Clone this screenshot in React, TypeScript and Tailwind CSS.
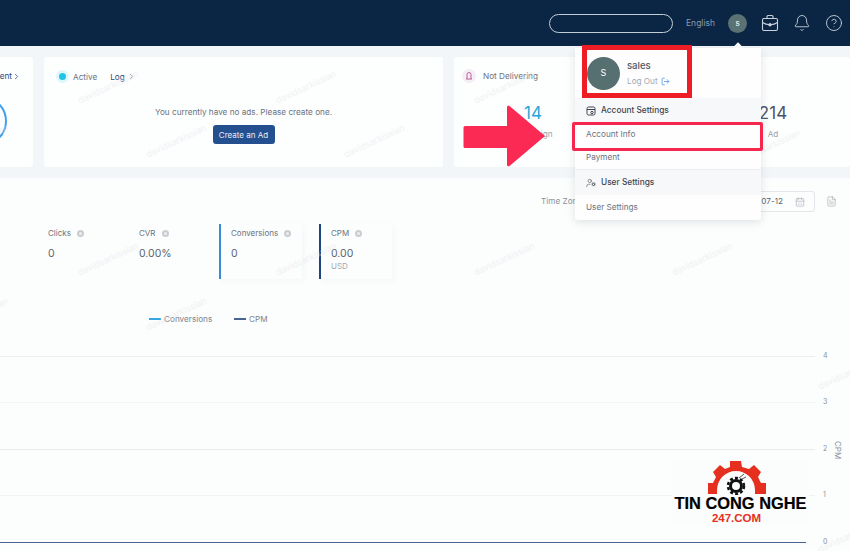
import React from 'react';
import { Bell, CircleHelp, LogOut, CalendarDays, FileText, UserCog, ChevronRight } from 'lucide-react';

const watermarks = [
  { x: 110, y: 86 }, { x: 308, y: 86 }, { x: 506, y: 86 },
  { x: -20, y: 140 }, { x: 178, y: 140 }, { x: 376, y: 140 }, { x: 772, y: 145 },
  { x: 110, y: 258 }, { x: 308, y: 258 }, { x: 506, y: 258 }, { x: 704, y: 258 },
  { x: -20, y: 313 }, { x: 178, y: 313 }, { x: 850, y: 372 }, { x: 850, y: 535 },
];

const InfoDot = () => (
  <span className="inline-flex h-[7px] w-[7px] items-center justify-center rounded-full bg-[#c9cdd1]">
    <span className="h-[3px] w-[3px] rounded-full bg-[#eceef0]" />
  </span>
);

const Metric = ({ label, value, unit, accent, width }: { label: string; value: string; unit?: string; accent?: string; width: string }) => (
  <div className={`h-[55px] shrink-0 ${width} ${accent ? `border-l-2 ${accent} pl-[10px] shadow-[2px_2px_6px_rgba(210,220,230,0.2)]` : ''}`}>
    <div className="flex items-center gap-[6px] pt-[4px] text-[8px] leading-[11px] text-[#6b7280]">
      {label} <InfoDot />
    </div>
    <div className="mt-[8px] text-[10.5px] leading-[14px] text-[#5b6472]">{value}</div>
    {unit && <div className="text-[8px] leading-[11px] text-[#a5abb3]">{unit}</div>}
  </div>
);

const ChartRow = ({ label, line }: { label: string; line: string }) => (
  <div className="flex h-[12px] items-center">
    <div className={line} />
    <span className="absolute left-[823px] text-[7px] text-[#8b929a]">{label}</span>
  </div>
);

const MenuHeading = ({ icon, label, height }: { icon: React.ReactNode; label: string; height: string }) => (
  <div className={`flex ${height} items-center gap-[5px] bg-[#f7f8f9] pl-[11px] text-[8.3px] font-medium text-[#3f4650]`}>
    {icon}
    {label}
  </div>
);

const Logo = () => (
  <div className="absolute left-[672px] top-[461px] flex w-[137px] flex-col items-center bg-[#fbfcfc]">
    <svg className="mr-[7px]" width="60" height="34" viewBox="0 0 60 34">
      <path
        d="M23 0h11l1 6 7 2 5-4 7 7-3 5 3 6h5v11H48v-4a19 19 0 0 0-38 0v4H1V22h5l3-6-3-5 7-7 5 4 5-2z"
        fill="#e5301f"
      />
      <circle cx="29" cy="25" r="5.5" fill="none" stroke="#111" strokeWidth="3" />
      <circle cx="29" cy="25" r="8" fill="none" stroke="#111" strokeWidth="2.5" strokeDasharray="3 2.2" />
      <path d="M32 17l5-4M35 18l4-2" stroke="#555" strokeWidth="1" />
    </svg>
    <div className="mt-[1px] whitespace-nowrap font-['Liberation_Sans',sans-serif] text-[16.4px] font-bold leading-[15px] text-black [-webkit-text-stroke:0.2px_black]">
      TIN CONG NGHE
    </div>
    <div className="mr-[8px] mt-[2px] font-['Liberation_Sans',sans-serif] text-[11.5px] font-bold leading-[11px] text-[#e5301f]">
      247.COM
    </div>
  </div>
);

const App = () => {
  return (
    <div className="relative h-[551px] w-[850px] overflow-hidden bg-[#f3f6f9] font-['Inter',sans-serif]">
      <header className="flex h-[46px] items-center justify-end bg-[#0b2545] pr-[7px]">
        <div className="mr-[13px] h-[19px] w-[124px] rounded-full border border-[#c3cdd5]" />
        <span className="mr-[13px] text-[8.5px] text-[#8b9bad]">English</span>
        <div className="mr-[14px] flex h-[19px] w-[19px] items-center justify-center rounded-full bg-[#5a7274] text-[8px] text-white">
          s
        </div>
        <svg className="mr-[14px]" width="18" height="18" viewBox="0 0 18 18" fill="none" stroke="#c8d2da" strokeWidth="1.1">
          <rect x="1.5" y="4.5" width="15" height="12" rx="1.5" />
          <path d="M6 4.5V2.5a1 1 0 0 1 1-1h4a1 1 0 0 1 1 1v2M1.5 8.5c4 3 11 3 15 0" />
          <path d="M9 9.5l1.5 1.2L9 12l-1.5-1.3z" fill="#c8d2da" />
        </svg>
        <Bell size={18} strokeWidth={1.2} className="mr-[14px] text-[#c8d2da]" />
        <CircleHelp size={18} strokeWidth={1.2} className="text-[#c8d2da]" />
      </header>

      <section className="mt-[11px] flex h-[110px] gap-[11px]">
        <div className="ml-[-167px] flex w-[200px] shrink-0 flex-col items-end rounded-[3px] bg-[#fdfefe] pr-[12px] pt-[14px]">
          <div className="flex items-center text-[8.2px] leading-[11px] text-[#2c4a7c]">
            Management <ChevronRight size={9} />
          </div>
          <div className="mr-[14px] mt-[14px] h-[50px] w-[50px] rounded-full border-[2.5px] border-[#3f9ff0]" />
        </div>

        <div className="w-[399px] shrink-0 rounded-[3px] bg-[#fdfefe] pt-[13px]">
          <div className="flex items-center pl-[12px] text-[8.2px] leading-[12px]">
            <span className="flex h-[13px] w-[13px] items-center justify-center rounded-full bg-[#dff6fa]">
              <span className="h-[7px] w-[7px] rounded-full bg-[#22c4e4]" />
            </span>
            <span className="ml-[4px] text-[#6b7280]">Active</span>
            <span className="ml-[13px] text-[#2c4a7c]">Log</span>
            <ChevronRight size={9} className="ml-[2px] text-[#6b7280]" />
          </div>
          <p className="mt-[23px] text-center text-[8.2px] leading-[12px] text-[#6b7280]">
            You currently have no ads. Please create one.
          </p>
          <div className="mt-[7px] flex justify-center">
            <button className="h-[19px] w-[62px] rounded-[3px] bg-[#24508f] text-[8px] text-[#e8eef6]">Create an Ad</button>
          </div>
        </div>

        <div className="flex-1 rounded-[3px] bg-[#fdfefe] pt-[12px]">
          <div className="flex items-center pl-[8px] text-[8.2px] leading-[14px] text-[#6b7280]">
            <span className="flex h-[14px] w-[14px] items-center justify-center rounded-full bg-[#f4eef5]">
              <svg width="8" height="8" viewBox="0 0 8 8" fill="none" stroke="#c0609a" strokeWidth="1">
                <path d="M2 7V2.5a2 2 0 0 1 4 0V7M1 7h6" />
              </svg>
            </span>
            <span className="ml-[7px]">Not Delivering</span>
          </div>
          <div className="mt-[20px] grid w-[379px] grid-cols-3 pl-[19px] text-center">
            <div>
              <div className="text-[17px] leading-[20px] text-[#2aa6d8]">14</div>
              <div className="mt-[5px] text-[8.2px] leading-[12px] text-[#9aa1a9]">Campaign</div>
            </div>
            <div>
              <div className="text-[17px] leading-[20px] text-[#2aa6d8]">14</div>
              <div className="mt-[5px] text-[8.2px] leading-[12px] text-[#9aa1a9]">Ad Group</div>
            </div>
            <div>
              <div className="text-[17px] leading-[20px] text-[#4b5565]">214</div>
              <div className="mt-[5px] text-[8.2px] leading-[12px] text-[#9aa1a9]">Ad</div>
            </div>
          </div>
        </div>
      </section>

      <section className="mt-[11px] h-[373px] bg-[#fcfdfd] pt-[13px]">
        <div className="flex h-[21px] items-center pl-[541px]">
          <span className="w-[204px] text-[8.2px] text-[#8b929a]">Time Zone</span>
          <div className="flex h-[21px] w-[70px] items-center justify-end rounded-[3px] border border-[#e3e6ea] pr-[9px] text-[8.2px] text-[#5b6472]">
            <span className="mr-[12px]">07-12</span>
            <CalendarDays size={10} strokeWidth={1.3} className="text-[#9aa1a9]" />
          </div>
          <FileText size={11} strokeWidth={1.3} className="ml-[11px] text-[#9aa1a9]" />
        </div>

        <div className="mt-[12px] flex pl-[48px]">
          <Metric label="Clicks" value="0" width="w-[91px]" />
          <Metric label="CVR" value="0.00%" width="w-[80px]" />
          <Metric label="Conversions" value="0" accent="border-[#3b8ad8]" width="w-[83px]" />
          <div className="w-[17px] shrink-0" />
          <Metric label="CPM" value="0.00" unit="USD" accent="border-[#1c4480]" width="w-[73px]" />
        </div>

        <div className="mt-[34px] flex h-[12px] items-center pl-[149px] text-[8.2px] text-[#7b838d]">
          <span className="h-[2px] w-[12px] bg-[#38a6e0]" />
          <span className="ml-[3px] w-[70px]">Conversions</span>
          <span className="h-[2px] w-[12px] bg-[#4a6491]" />
          <span className="ml-[3px]">CPM</span>
        </div>

        <div className="mt-[25px] flex h-[198px] flex-col justify-between">
          <ChartRow label="4" line="h-px w-[815px] bg-[#eceff1]" />
          <ChartRow label="3" line="h-px w-[815px] bg-[#f2f4f5]" />
          <ChartRow label="2" line="h-px w-[815px] bg-[#e8ecee]" />
          <ChartRow label="1" line="h-px w-[815px] bg-[#f0f2f3]" />
          <ChartRow label="0" line="h-px w-[806px] bg-[#4a6491]" />
        </div>
      </section>

      <span className="absolute left-[832px] top-[441px] text-[8px] text-[#8b929a] [writing-mode:vertical-rl]">CPM</span>

      {watermarks.map((w) => (
        <span
          key={`${w.x}-${w.y}`}
          className="pointer-events-none absolute w-[70px] -translate-x-1/2 -translate-y-1/2 -rotate-[25deg] text-[9px] text-[#e4e8ec] opacity-50"
          style={{ left: w.x, top: w.y }}
        >
          davidsarkissian
        </span>
      ))}

      <div className="absolute left-[734px] top-[44px] h-[8px] w-[8px] rotate-45 bg-white" />
      <div className="absolute left-[575px] top-[48px] w-[186px] rounded-b-[3px] bg-[#fefefe] shadow-[0_2px_8px_rgba(120,130,140,0.22)]">
        <div className="flex h-[50px] items-center pl-[12px]">
          <div className="flex h-[33px] w-[33px] items-center justify-center rounded-full bg-[#566f70] text-[9px] text-white">S</div>
          <div className="ml-[7px]">
            <div className="text-[9.5px] font-medium leading-[12px] text-[#4b5563]">sales</div>
            <div className="mt-[4px] flex items-center gap-[3px] text-[8.2px] leading-[11px] text-[#a3a9b0]">
              Log Out <LogOut size={9} className="text-[#4a8fe0]" />
            </div>
          </div>
        </div>
        <MenuHeading
          label="Account Settings"
          height="h-[25px]"
          icon={
            <svg width="10" height="10" viewBox="0 0 10 10" fill="none" stroke="#3f4650" strokeWidth="1">
              <rect x="1" y="1" width="8" height="8" rx="1.5" />
              <path d="M1 3.5h8" />
              <circle cx="6" cy="6.5" r="1.2" />
            </svg>
          }
        />
        <div className="flex h-[23px] items-center pl-[11px] text-[8.2px] text-[#6b7280]">Account Info</div>
        <div className="flex h-[24px] items-center border-b border-[#eceef0] pl-[11px] text-[8.2px] text-[#6b7280]">Payment</div>
        <MenuHeading label="User Settings" height="h-[25px]" icon={<UserCog size={10} strokeWidth={1.3} />} />
        <div className="flex h-[25px] items-center pl-[11px] text-[8.2px] text-[#6b7280]">User Settings</div>
      </div>

      <div className="absolute left-[582px] top-[45px] h-[53px] w-[110px] border-[5px] border-[#ee1c25]" />
      <div className="absolute left-[572px] top-[122px] h-[29px] w-[191px] rounded-[2px] border-[3px] border-[#f5274f]" />

      <svg className="absolute left-[463px] top-[104px]" width="84" height="64" viewBox="0 0 84 64">
        <path d="M2 22h42V3a1.5 1.5 0 0 1 2.5-1L82 32 46.5 62a1.5 1.5 0 0 1-2.5-1V44H2a1.5 1.5 0 0 1-1.5-1.5v-19A1.5 1.5 0 0 1 2 22z" fill="#fb2a54" />
      </svg>

      <Logo />
    </div>
  );
};

export default App;
